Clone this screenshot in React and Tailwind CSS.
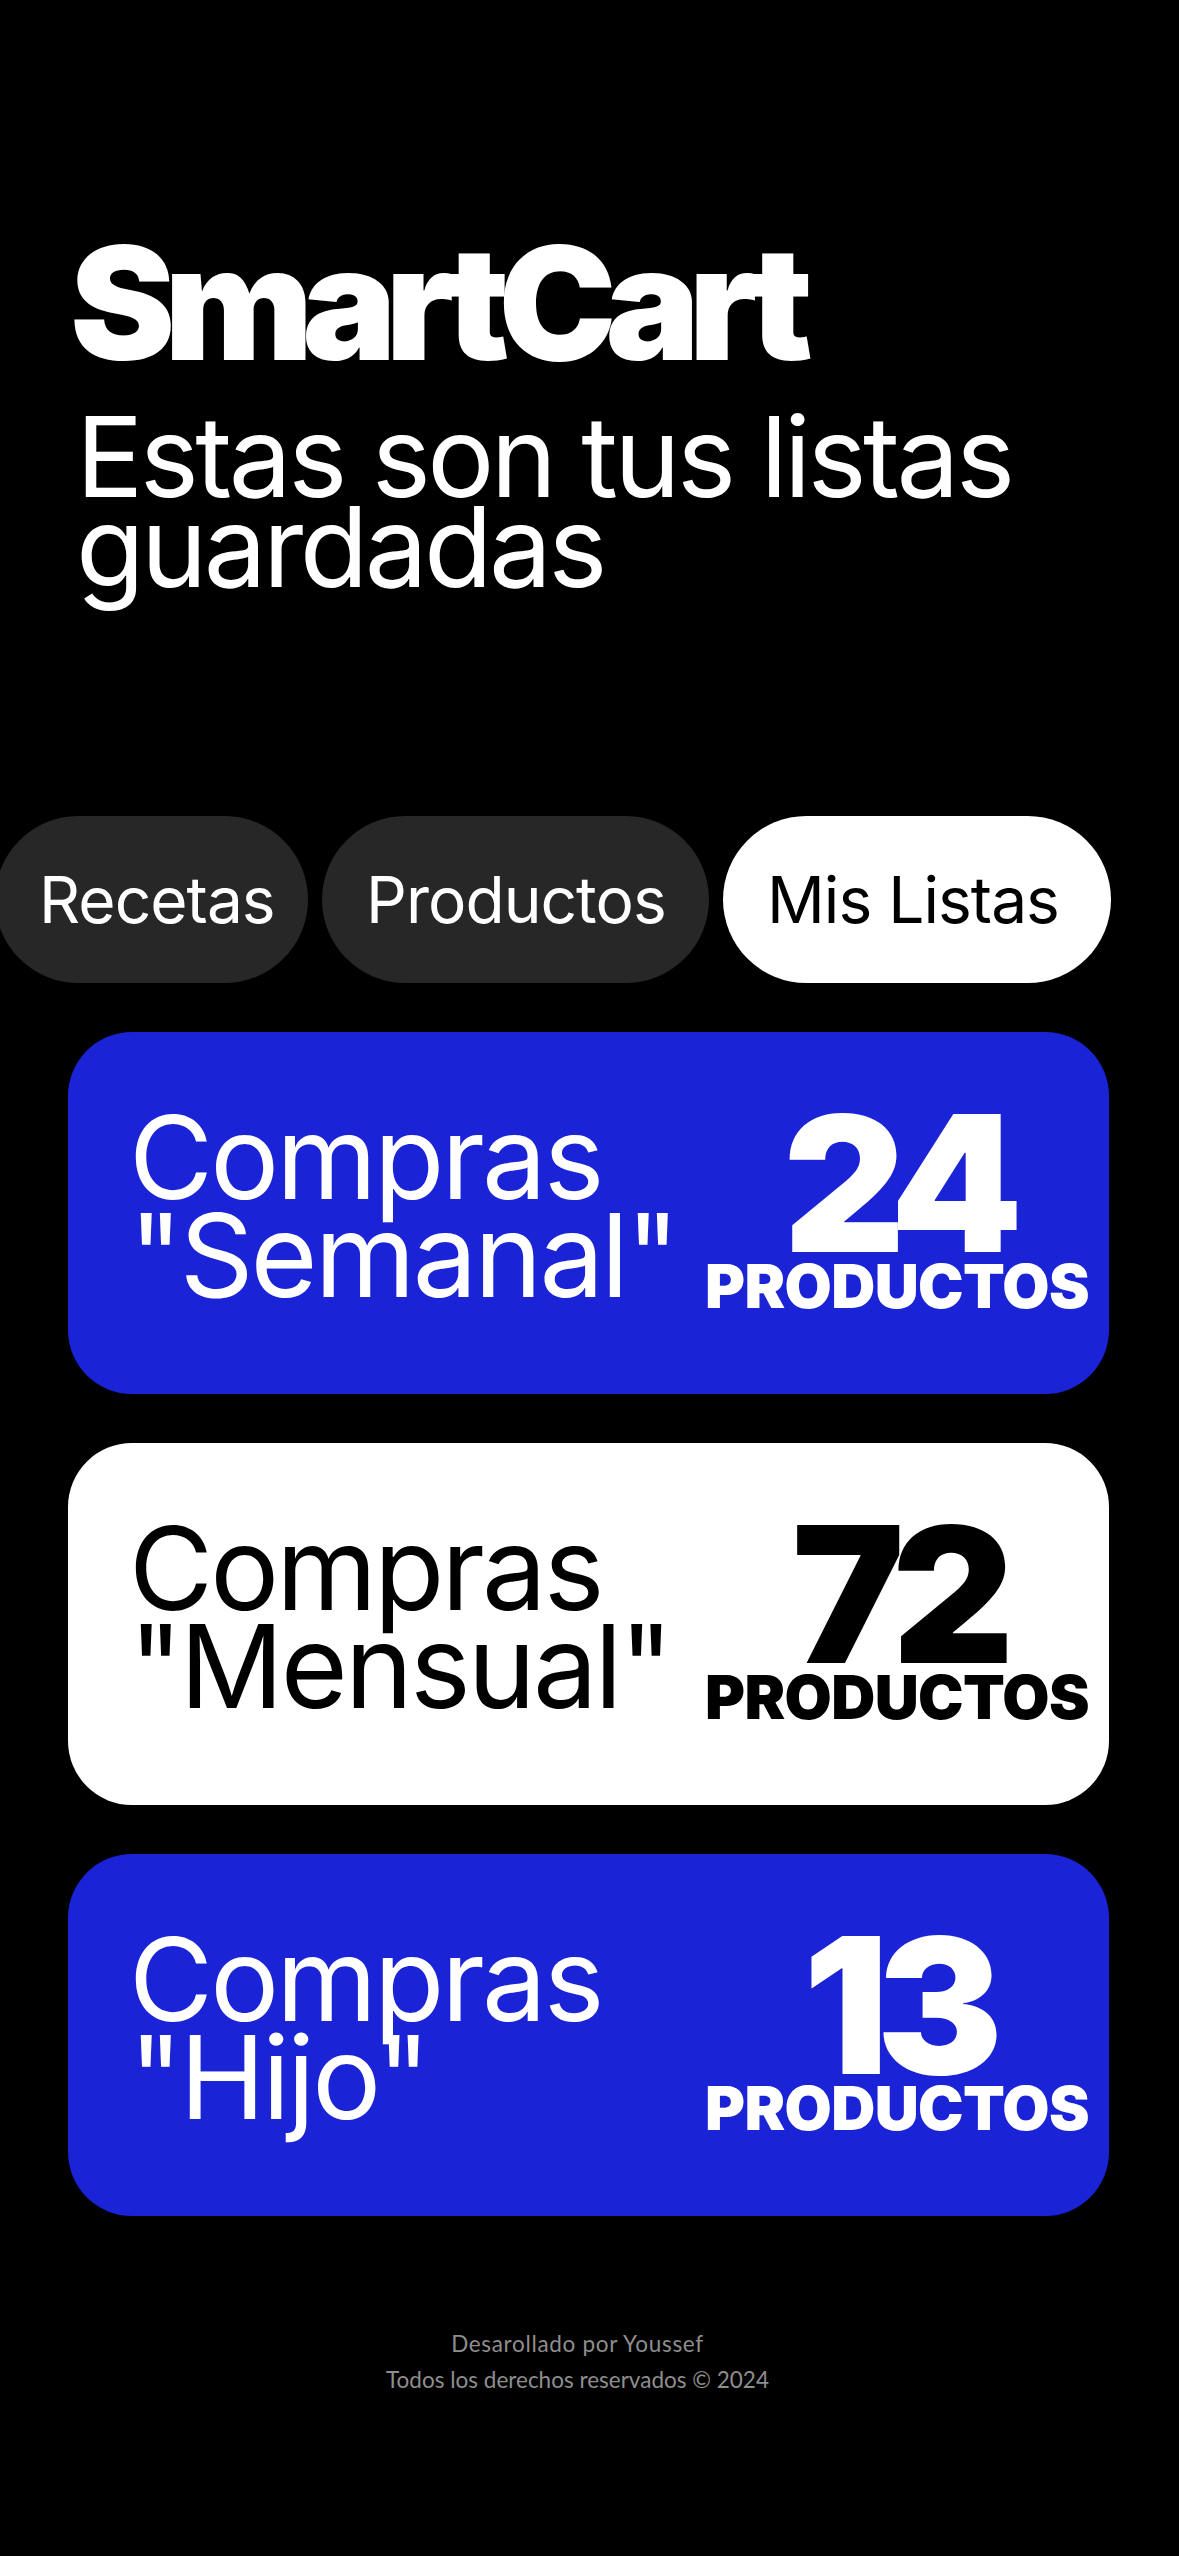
const lists = [
    { name: "Semanal", count: 24, dark: false },
    { name: "Mensual", count: 72, dark: true },
    { name: "Hijo", count: 13, dark: false },
]

const tabs = [
    { name: "Recetas", width: "w-[313px]", active: false },
    { name: "Productos", width: "w-[387px]", active: false },
    { name: "Mis Listas", width: "w-[388px]", active: true },
]

const ListCard = ({ name, count, dark }) => {
    return (
        <div className={`h-[362px] rounded-[64px] pl-[61px] pr-[20px] flex items-center justify-between ${dark ? "bg-white text-black" : "bg-[#1b23d7] text-white"}`}>
            <div className="mb-[12px] text-[115px] leading-[98px] tracking-[-0.025em]">
                <div>Compras</div>
                <div>"{name}"</div>
            </div>
            <div className="w-[384px] flex flex-col items-center">
                <span className="text-[189px] leading-[145px] font-black tracking-[-0.065em]">{count}</span>
                <span className="text-[61px] leading-[60px] font-black tracking-[-0.01em]">PRODUCTOS</span>
            </div>
        </div>
    )
}

const App = () => {
    return (
        <div className="min-h-screen bg-black overflow-hidden font-['Inter',sans-serif] pb-[150px]">
            {/* header */}
            <header className="pl-[70px] pt-[224px] text-white">
                <h1 className="text-[158px] leading-none font-black tracking-[-0.07em]">SmartCart</h1>
                <p className="mt-[29px] pl-[6px] text-[112px] leading-[90px] tracking-[-0.032em]">
                    Estas son tus listas<br />guardadas
                </p>
            </header>

            {/* tabs */}
            <nav className="mt-[225px] -ml-[5px] flex gap-[14px]">
                {tabs.map((tab) => (
                    <button
                        key={tab.name}
                        className={`h-[167px] shrink-0 rounded-full pl-[44px] text-left text-[64px] tracking-[-0.015em] whitespace-nowrap ${tab.width} ${tab.active ? "bg-white text-black" : "bg-[#272727] text-white"}`}
                    >
                        {tab.name}
                    </button>
                ))}
            </nav>

            {/* saved lists */}
            <section className="mt-[49px] ml-[68px] mr-[70px] flex flex-col gap-[49px]">
                {lists.map((list) => (
                    <ListCard key={list.name} {...list} />
                ))}
            </section>

            <footer className="mt-[110px] pr-[24px] text-center text-[22.5px] leading-[36px] text-[#8e8e8e] font-['Lato',sans-serif]">
                <p className="tracking-[0.03em]">Desarollado por Youssef</p>
                <p>Todos los derechos reservados © 2024</p>
            </footer>
        </div>
    )
}

export default App;
